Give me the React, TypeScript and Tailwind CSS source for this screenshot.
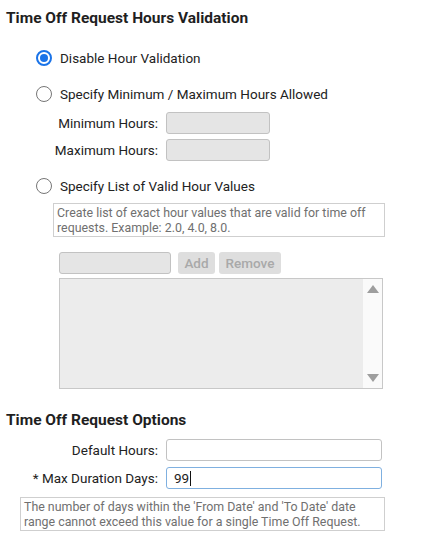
export default function App() {
  const font = { fontFamily: 'Roboto, "Liberation Sans", Arial, sans-serif' };
  return (
    <div className="bg-white text-[#222] text-[13.5px] w-[421px] h-[556px] overflow-hidden pt-[8px]" style={font}>
      <h2 className="pl-[6px] text-[15.5px] font-bold leading-[20px] text-[#1f1f1f]">Time Off Request Hours Validation</h2>

      {/* Hour validation choice */}
      <div className="mt-[20px] flex flex-col">
        <label className="flex items-center h-[20px] pl-[36px]">
          <span className="w-[16px] h-[16px] rounded-full border-2 border-[#1a73e8] flex items-center justify-center shrink-0">
            <span className="w-[8px] h-[8px] rounded-full bg-[#1a73e8]" />
          </span>
          <span className="ml-[8px]">Disable Hour Validation</span>
        </label>

        <label className="flex items-center h-[20px] pl-[36px] mt-[16px]">
          <span className="w-[16px] h-[16px] rounded-full border border-[#767676] shrink-0" />
          <span className="ml-[8px]">Specify Minimum / Maximum Hours Allowed</span>
        </label>

        <div className="mt-[8px] flex items-center">
          <span className="w-[158px] text-right">Minimum Hours:</span>
          <span className="ml-[8px] w-[104px] h-[22px] rounded-[3px] border border-[#c2c2c2] bg-[#e5e5e5]" />
        </div>
        <div className="mt-[5px] flex items-center">
          <span className="w-[158px] text-right">Maximum Hours:</span>
          <span className="ml-[8px] w-[104px] h-[22px] rounded-[3px] border border-[#c2c2c2] bg-[#e5e5e5]" />
        </div>

        <label className="flex items-center h-[20px] pl-[36px] mt-[15px]">
          <span className="w-[16px] h-[16px] rounded-full border border-[#767676] shrink-0" />
          <span className="ml-[8px]">Specify List of Valid Hour Values</span>
        </label>

        <div className="ml-[53px] mt-[7px] w-[332px] border border-[#cfcfcf] px-[3px] py-[1px] text-[12.4px] leading-[15px] text-[#707070]">
          Create list of exact hour values that are valid for time off requests. Example: 2.0, 4.0, 8.0.
        </div>

        <div className="ml-[59px] mt-[15px] flex items-center">
          <span className="w-[112px] h-[22px] rounded-[3px] border border-[#c2c2c2] bg-[#e5e5e5]" />
          <span className="ml-[7px] h-[22px] w-[37px] rounded-[3px] bg-[#dedede] text-[#a9a9a9] font-medium flex items-center justify-center">Add</span>
          <span className="ml-[4px] h-[22px] w-[62px] rounded-[3px] bg-[#dedede] text-[#a9a9a9] font-medium flex items-center justify-center">Remove</span>
        </div>

        <div className="ml-[59px] mt-[4px] w-[324px] h-[111px] border border-[#c8c8c8] bg-[#ececec] flex justify-end">
          <div className="w-[19px] bg-[#fafafa] flex flex-col items-center justify-between py-[6px]">
            <svg width="12" height="8" viewBox="0 0 12 8"><path d="M6 0 L12 8 L0 8 Z" fill="#9e9e9e" /></svg>
            <svg width="12" height="8" viewBox="0 0 12 8"><path d="M0 0 L12 0 L6 8 Z" fill="#9e9e9e" /></svg>
          </div>
        </div>
      </div>

      {/* Request options */}
      <h2 className="mt-[21px] pl-[6px] text-[15.5px] font-bold leading-[20px] text-[#1f1f1f]">Time Off Request Options</h2>
      <div className="mt-[9px] flex items-center">
        <span className="w-[158px] text-right">Default Hours:</span>
        <span className="ml-[8px] w-[216px] h-[22px] rounded-[3px] border border-[#c2c2c2] bg-white" />
      </div>
      <div className="mt-[6px] flex items-center">
        <span className="w-[158px] text-right">* Max Duration Days:</span>
        <span className="ml-[8px] w-[216px] h-[22px] rounded-[3px] border border-[#7fb0e0] bg-white flex items-center pl-[7px]">
          99<span className="ml-[1px] w-px h-[15px] bg-[#111]" />
        </span>
      </div>
      <div className="ml-[20px] mt-[8px] w-[365px] border border-[#cfcfcf] px-[3px] py-[1px] text-[12.4px] leading-[15px] text-[#707070]">
        The number of days within the 'From Date' and 'To Date' date range cannot exceed this value for a single Time Off Request.
      </div>
    </div>
  );
}
